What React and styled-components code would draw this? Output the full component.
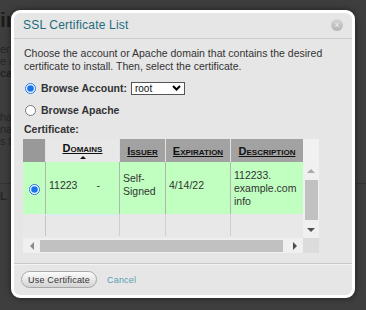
import React from "react";
import styled, { createGlobalStyle } from "styled-components";

const GlobalStyle = createGlobalStyle`
  html, body {
    margin: 0;
    padding: 0;
  }
  body {
    width: 366px;
    height: 310px;
    overflow: hidden;
    background: #3e3e3e;
    font-family: "Liberation Sans", Arial, sans-serif;
  }
`;

// dimmed page behind the dialog
const Page = styled.div`
  position: relative;
  width: 366px;
  height: 310px;
  overflow: hidden;
  padding-top: 7px;
  box-sizing: border-box;
  color: #222;
`;

const PageTitle = styled.h1`
  margin: 0;
  font-size: 21px;
  line-height: 25px;
  font-weight: bold;
  color: #1c1c1c;
`;

const PageText = styled.p`
  margin: ${(p) => p.$top || 0}px 0 0 0;
  font-size: 11px;
  line-height: 12px;
  font-weight: ${(p) => (p.$bold ? "bold" : "normal")};
  color: #252525;
`;

const PageRule = styled.hr`
  margin: 36px 0 0;
  border: 0;
  border-top: 1px solid #333;
`;

const Modal = styled.section`
  position: absolute;
  left: 11px;
  top: 10px;
  width: 344px;
  height: 288px;
  box-sizing: border-box;
  border: 3px solid #fff;
  border-radius: 9px;
  background: #e6e6e6;
  box-shadow: 0 0 6px rgba(0, 0, 0, 0.5);
  display: flex;
  flex-direction: column;
  overflow: hidden;
`;

const Header = styled.header`
  height: 26px;
  box-sizing: border-box;
  border-bottom: 1px solid #cbcbcb;
  display: flex;
  align-items: center;
  justify-content: space-between;
  padding: 0 9px 1px 9px;
`;

const Title = styled.h2`
  margin: 0;
  font-size: 12px;
  font-weight: normal;
  letter-spacing: 0.2px;
  color: #1f6b7e;
`;

const Close = styled.span`
  width: 12px;
  height: 12px;
  border-radius: 50%;
  background: linear-gradient(#d6d6d6, #b3b3b3);
  color: #f4f4f4;
  font-size: 8px;
  line-height: 11px;
  text-align: center;
`;

const Body = styled.div`
  flex: 1;
  padding: 8px 9px 0;
  color: #333;
`;

const Intro = styled.p`
  margin: 0;
  padding-left: 1px;
  font-size: 10.5px;
  line-height: 13px;
`;

const RadioRow = styled.label`
  display: flex;
  align-items: center;
  height: 18px;
  margin-top: ${(p) => p.$top}px;
  font-size: 10.5px;
  font-weight: bold;
  color: #333;
`;

const Radio = styled.input.attrs({ type: "radio" })`
  width: 11px;
  height: 11px;
  margin: 0 5px 0 2px;
  accent-color: #1a73e8;
`;

const Select = styled.span`
  display: flex;
  align-items: center;
  justify-content: space-between;
  width: 54px;
  height: 13px;
  box-sizing: border-box;
  margin-left: 4px;
  padding: 0 3px 0 3px;
  border: 1px solid #555;
  background: #fff;
  font-weight: normal;
  font-size: 10px;
  color: #111;
`;

const Label = styled.div`
  margin-top: 4px;
  padding-left: 1px;
  font-size: 10.5px;
  line-height: 13px;
  font-weight: bold;
`;

const ScrollBox = styled.div`
  margin-top: 3px;
  width: 296px;
  display: grid;
  grid-template-columns: 280px 16px;
  grid-template-rows: 99px 15px;
`;

const Viewport = styled.div`
  overflow: hidden;
  background: #e8e8e8;
`;

const Table = styled.table`
  width: 280px;
  table-layout: fixed;
  border-collapse: separate;
  border-spacing: 0;
`;

const Th = styled.th`
  height: 23px;
  padding: 0;
  background: ${(p) => p.$bg};
  border-left: ${(p) => (p.$first ? "0" : "1px solid #e2e2e2")};
  vertical-align: middle;
  text-align: center;
`;

const HeadText = styled.span`
  font-size: 11px;
  font-weight: bold;
  font-variant: small-caps;
  text-decoration: underline;
  color: #111;
  display: block;
  line-height: 11px;
  margin-top: ${(p) => (p.$sorted ? 1 : 2)}px;
`;

const SortArrow = styled.span`
  display: block;
  width: 0;
  height: 0;
  margin: 2px auto 0;
  border-left: 3px solid transparent;
  border-right: 3px solid transparent;
  border-bottom: 3px solid #111;
`;

const Td = styled.td`
  height: ${(p) => p.$h}px;
  box-sizing: border-box;
  padding: ${(p) => (p.$pad ? "2px 0 8px 3px" : "0 0 0 3px")};
  background: ${(p) => p.$bg || "transparent"};
  border-left: ${(p) => (p.$first ? "0" : `1px solid ${p.$line || "#b4b4b4"}`)};
  border-top: ${(p) => (p.$strip ? "2px solid #dcecee" : "0")};
  vertical-align: middle;
  font-size: 10.5px;
  line-height: 13px;
  color: #333;
  text-align: ${(p) => (p.$center ? "center" : "left")};
`;

const RowRadio = styled(Radio)`
  margin: 12px 0 0 -3px;
`;

const Dash = styled.span`
  margin-left: 19px;
`;

const VBar = styled.div`
  display: flex;
  flex-direction: column;
  background: #f0f0f0;
`;

const Gutter = styled.div`
  height: 23px;
  background: #f1f1f1;
`;

const ArrowBox = styled.div`
  display: flex;
  align-items: center;
  justify-content: center;
  width: ${(p) => p.$w || "auto"};
  height: ${(p) => p.$h || "auto"};
`;

const Arrow = styled.span`
  width: 0;
  height: 0;
  ${(p) =>
    p.$dir === "up" &&
    `border-left: 4px solid transparent; border-right: 4px solid transparent; border-bottom: 4px solid ${p.$color};`}
  ${(p) =>
    p.$dir === "down" &&
    `border-left: 4px solid transparent; border-right: 4px solid transparent; border-top: 4px solid ${p.$color};`}
  ${(p) =>
    p.$dir === "left" &&
    `border-top: 4px solid transparent; border-bottom: 4px solid transparent; border-right: 4px solid ${p.$color};`}
  ${(p) =>
    p.$dir === "right" &&
    `border-top: 4px solid transparent; border-bottom: 4px solid transparent; border-left: 4px solid ${p.$color};`}
`;

const Thumb = styled.div`
  background: #c1c1c1;
  ${(p) =>
    p.$vertical
      ? "height: 40px; margin: 1px 1px 0 2px;"
      : "width: 243px; height: 12px; margin-top: 2px;"}
`;

const Spacer = styled.div`
  flex: 1;
`;

const HBar = styled.div`
  display: flex;
  background: #f0f0f0;
`;

const Corner = styled.div`
  background: #dcdcdc;
`;

const Footer = styled.footer`
  height: 32px;
  box-sizing: border-box;
  border-top: 1px solid #c9c9c9;
  box-shadow: inset 0 1px 0 #f3f3f3;
  display: flex;
  align-items: center;
  padding: 0 0 0 7px;
`;

const Button = styled.button`
  width: 76px;
  height: 17px;
  padding: 0;
  border: 1px solid #a8a8a8;
  border-radius: 9px;
  background: linear-gradient(#fcfcfc, #d3d3d3);
  font-family: "Liberation Sans", Arial, sans-serif;
  font-size: 9px;
  letter-spacing: 0.2px;
  color: #333;
`;

const Cancel = styled.a`
  margin-left: 10px;
  font-size: 9px;
  letter-spacing: 0.2px;
  color: #5a9fb1;
  text-decoration: none;
`;

export default function App() {
  return (
    <Page>
      <GlobalStyle />
      <PageTitle>in</PageTitle>
      <PageText $top={11}>er</PageText>
      <PageText>e a</PageText>
      <PageText $bold>ca</PageText>
      <PageText $top={32}>ha</PageText>
      <PageText>na</PageText>
      <PageText>s th</PageText>
      <PageRule />
      <PageText $top={6} $bold>L</PageText>

      <Modal>
        <Header>
          <Title>SSL Certificate List</Title>
          <Close>x</Close>
        </Header>
        <Body>
          <Intro>
            Choose the account or Apache domain that contains the desired
            <br />
            certificate to install. Then, select the certificate.
          </Intro>
          <RadioRow $top={6}>
            <Radio name="browse" defaultChecked />
            Browse Account:
            <Select>
              root
              <svg width="9" height="6" viewBox="0 0 9 6">
                <path d="M1 1 L4.5 4.5 L8 1" fill="none" stroke="#000" strokeWidth="2" />
              </svg>
            </Select>
          </RadioRow>
          <RadioRow $top={4}>
            <Radio name="browse" />
            Browse Apache
          </RadioRow>
          <Label>Certificate:</Label>
          <ScrollBox>
            <Viewport>
              <Table>
                <colgroup>
                  <col style={{ width: 22 }} />
                  <col style={{ width: 74 }} />
                  <col style={{ width: 46 }} />
                  <col style={{ width: 65 }} />
                  <col style={{ width: 73 }} />
                </colgroup>
                <thead>
                  <tr>
                    <Th $first $bg="#999" />
                    <Th $bg="#e8e8e8">
                      <HeadText $sorted>Domains</HeadText>
                      <SortArrow />
                    </Th>
                    <Th $bg="#a2a2a2">
                      <HeadText>Issuer</HeadText>
                    </Th>
                    <Th $bg="#a2a2a2">
                      <HeadText>Expiration</HeadText>
                    </Th>
                    <Th $bg="#a2a2a2">
                      <HeadText>Description</HeadText>
                    </Th>
                  </tr>
                </thead>
                <tbody>
                  <tr>
                    <Td $first $pad $h={52} $bg="#c0ffc0" $center>
                      <RowRadio name="cert" defaultChecked />
                    </Td>
                    <Td $pad $h={52} $bg="#c0ffc0">
                      11223<Dash>-</Dash>
                    </Td>
                    <Td $pad $h={52} $bg="#c0ffc0">
                      Self-
                      <br />
                      Signed
                    </Td>
                    <Td $pad $h={52} $bg="#c0ffc0">
                      4/14/22
                    </Td>
                    <Td $h={52} $bg="#c0ffc0">
                      112233.
                      <br />
                      example.com
                      <br />
                      info
                    </Td>
                  </tr>
                  <tr>
                    <Td $first $h={22} />
                    <Td $h={22} $line="#c4c4c4" $strip />
                    <Td $h={22} $line="#cfcfcf" />
                    <Td $h={22} $line="#cfcfcf" />
                    <Td $h={22} $line="#cfcfcf" />
                  </tr>
                </tbody>
              </Table>
            </Viewport>
            <VBar>
              <Gutter />
              <ArrowBox $h="17px">
                <Arrow $dir="up" $color="#a9a9a9" />
              </ArrowBox>
              <Thumb $vertical />
              <Spacer />
              <ArrowBox $h="17px">
                <Arrow $dir="down" $color="#505050" />
              </ArrowBox>
            </VBar>
            <HBar>
              <ArrowBox $w="17px">
                <Arrow $dir="left" $color="#8a8a8a" />
              </ArrowBox>
              <Thumb />
              <Spacer />
              <ArrowBox $w="17px">
                <Arrow $dir="right" $color="#4e4e4e" />
              </ArrowBox>
            </HBar>
            <Corner />
          </ScrollBox>
        </Body>
        <Footer>
          <Button>Use Certificate</Button>
          <Cancel href="#">Cancel</Cancel>
        </Footer>
      </Modal>
    </Page>
  );
}
